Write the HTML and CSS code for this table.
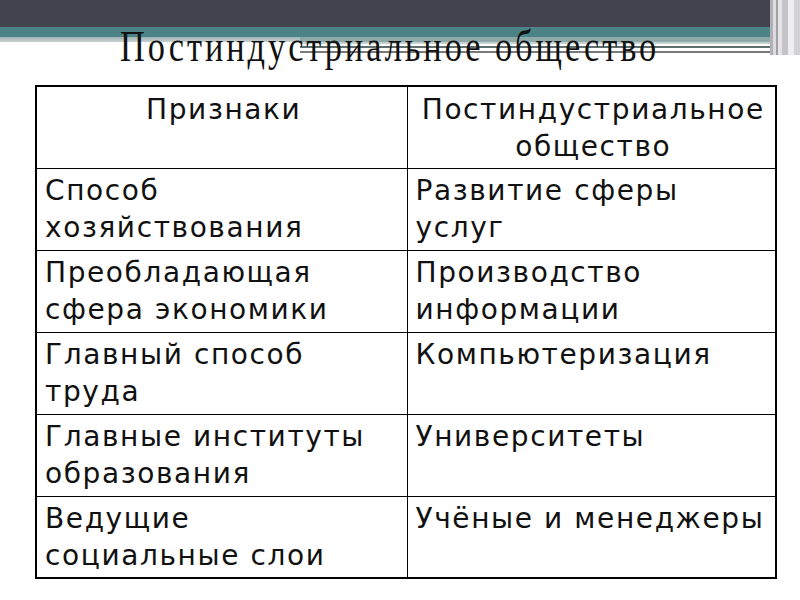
FILE: index.html
```html
<!DOCTYPE html>
<html lang="ru">
<head>
<meta charset="utf-8">
<link rel="stylesheet" href="styles.css">
</head>
<body>
<div class="slide">
  <div class="band">
    <div class="band-dark"></div>
    <div class="band-teal"></div>
    <div class="stripes">
      <div class="stripe-left"></div>
      <div class="stripe-right"></div>
    </div>
    <div class="vstripes"></div>
  </div>
  <h1 class="title"><span>Постиндустриальное общество</span></h1>
  <table class="grid">
    <tr class="head">
      <td>Признаки</td>
      <td>Постиндустриальное общество</td>
    </tr>
    <tr><td>Способ<br>хозяйствования</td><td>Развитие сферы<br>услуг</td></tr>
    <tr><td>Преобладающая<br>сфера экономики</td><td>Производство<br>информации</td></tr>
    <tr><td>Главный способ<br>труда</td><td>Компьютеризация</td></tr>
    <tr><td>Главные институты<br>образования</td><td>Университеты</td></tr>
    <tr><td>Ведущие<br>социальные слои</td><td>Учёные и менеджеры</td></tr>
  </table>
</div>
</body>
</html>
```
FILE: styles.css
```css
html, body { margin: 0; padding: 0; background: #fff; }
.slide { position: relative; width: 800px; height: 600px; overflow: hidden; background: #fff; }
.band { position: absolute; left: 0; top: 0; width: 800px; height: 60px; }
.band-dark { height: 27px; background: #43434f; }
.band-teal { height: 10px; background: #4b8387; }
.stripes { position: relative; height: 18px; }
.stripe-left { position: absolute; left: 0; top: 0; width: 310px; height: 5px; background: linear-gradient(#9fb5b5, #c8d0d0); }
.stripe-right { position: absolute; left: 300px; top: 0; width: 470px; height: 18px;
  background: linear-gradient(#8fa9a9 0 5px, #c5d2d2 5px 7px, #fff 7px 9px, #5f6f6f 9px 11px, #fff 11px 14px, #7a7a7a 14px 16px, transparent 16px); }
.vstripes { position: absolute; right: 0; top: 0; width: 30px; height: 55px;
  background: linear-gradient(90deg, #b0b0b6 0 3px, #dcdcdf 3px 6px, #a0a0a6 6px 8px, #e4e4e6 8px 12px, #c4c4c8 12px 18px, #eeeef0 18px 24px, #d2d2d5 24px 30px); }
.title { position: relative; margin: 0; padding: 24px 20px 0 0; height: 57px; box-sizing: border-box; text-align: center;
  font-family: "Liberation Serif", serif; font-weight: normal; font-size: 44px; line-height: 45px; color: #111; white-space: nowrap; }
.title span { display: inline-block; letter-spacing: 3.8px; transform: scaleX(0.78); transform-origin: 50% 0; }
.grid { margin: 28px 0 0 35px; border-collapse: collapse; width: 742px; table-layout: fixed;
  font-family: "DejaVu Sans", sans-serif; font-size: 28px; letter-spacing: 1.6px; line-height: 37px; color: #111; border: 2px solid #000; }
.grid td { border: 1.5px solid #000; height: 82px; vertical-align: top; padding: 3px 4px 0 8px; box-sizing: border-box; white-space: nowrap; }
.grid td:first-child { width: 371px; }
.grid .head td { text-align: center; padding-top: 4px; white-space: normal; }
```
